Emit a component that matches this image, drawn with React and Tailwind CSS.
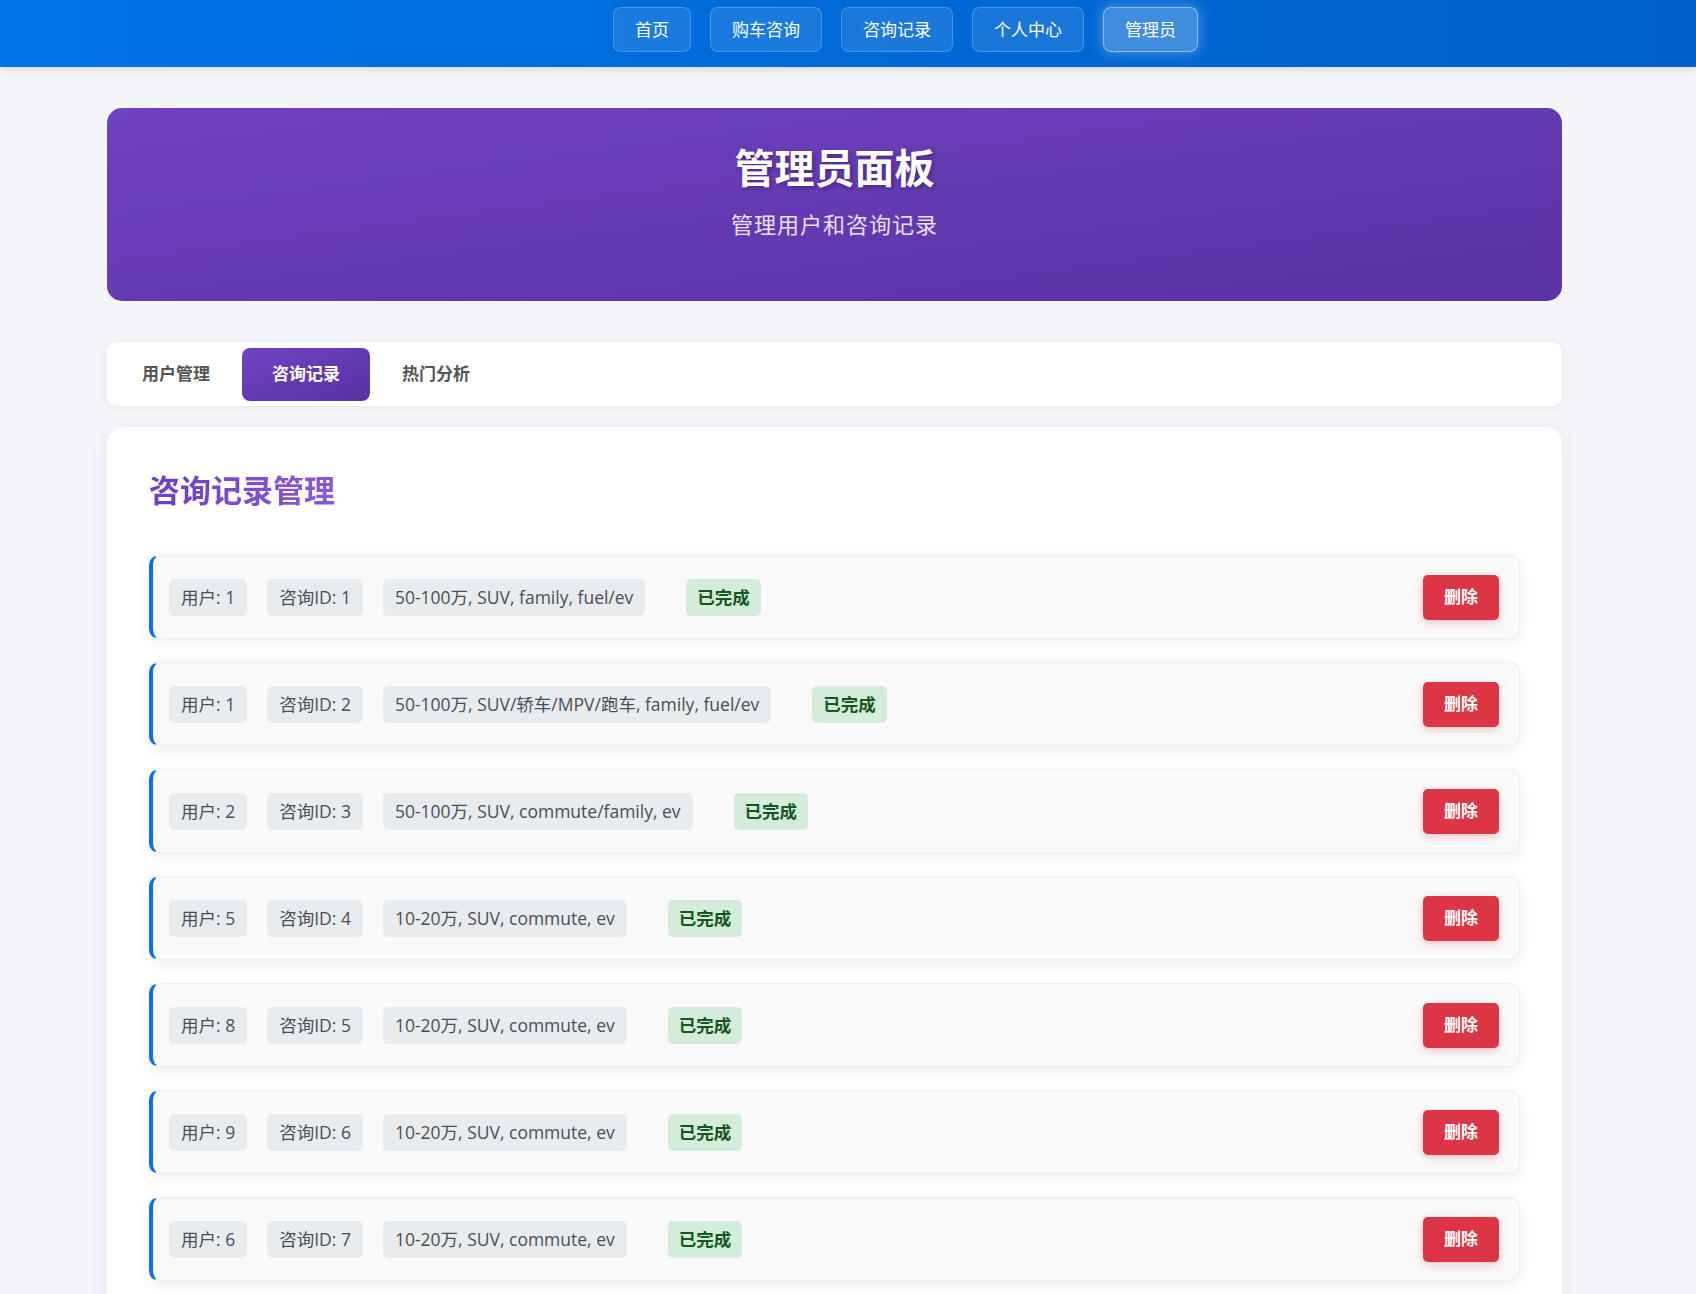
import React, { useState } from 'react';

const navItems = ['首页', '购车咨询', '咨询记录', '个人中心', '管理员'];
const tabs = ['用户管理', '咨询记录', '热门分析'];

const records = [
  { user: 1, id: 1, summary: '50-100万, SUV, family, fuel/ev' },
  { user: 1, id: 2, summary: '50-100万, SUV/轿车/MPV/跑车, family, fuel/ev' },
  { user: 2, id: 3, summary: '50-100万, SUV, commute/family, ev' },
  { user: 5, id: 4, summary: '10-20万, SUV, commute, ev' },
  { user: 8, id: 5, summary: '10-20万, SUV, commute, ev' },
  { user: 9, id: 6, summary: '10-20万, SUV, commute, ev' },
  { user: 6, id: 7, summary: '10-20万, SUV, commute, ev' },
  { user: 3, id: 8, summary: '20-30万, 轿车, commute, fuel' },
];

const Tag = ({ children }) => (
  <span className="rounded-[5px] bg-[#e9ecef] px-[12px] py-[5px] text-[17.5px] leading-[27px] text-[#4a4f55]">
    {children}
  </span>
);

const App = () => {
  const [activeTab, setActiveTab] = useState('咨询记录');

  return (
    <div className="min-h-screen bg-[#f4f5f9] font-['Open_Sans','Noto_Sans_CJK_SC',sans-serif]">
      {/* Top Navigation */}
      <nav className="h-[67px] bg-gradient-to-r from-[#0074e8] to-[#0060c9] pt-[7px] shadow-[0_2px_10px_rgba(0,0,0,0.12)]">
        <div className="ml-[613px] flex gap-[19px]">
          {navItems.map((item) => (
            <button
              key={item}
              className={
                item === '管理员'
                  ? 'rounded-[8px] border border-white/40 bg-white/25 px-[21px] py-[9px] text-[17px] leading-[25px] text-white shadow-[0_0_14px_rgba(255,255,255,0.35)]'
                  : 'rounded-[8px] border border-white/20 bg-white/10 px-[21px] py-[9px] text-[17px] leading-[25px] text-white'
              }
            >
              {item}
            </button>
          ))}
        </div>
      </nav>

      <main className="ml-[107px] w-[1455px] pt-[41px]">
        {/* Header */}
        <div className="h-[193px] rounded-[15px] bg-gradient-to-br from-[#6f42c1] to-[#5a32a3] pt-[31px] text-center text-white">
          <h1 className="text-[40px] font-bold leading-[58px] [text-shadow:2px_2px_4px_rgba(0,0,0,0.3)]">
            管理员面板
          </h1>
          <p className="mt-[12px] text-[22px] leading-[30px] tracking-[1px] text-white/85">管理用户和咨询记录</p>
        </div>

        {/* Tabs */}
        <div className="mt-[41px] flex h-[64px] items-center gap-[2px] rounded-[10px] bg-white px-[5px] shadow-[0_2px_10px_rgba(0,0,0,0.05)]">
          {tabs.map((tab) => (
            <button
              key={tab}
              onClick={() => setActiveTab(tab)}
              className={
                activeTab === tab
                  ? 'h-[53px] w-[128px] rounded-[8px] bg-gradient-to-br from-[#6f42c1] to-[#5a32a3] text-[17px] font-bold text-white'
                  : 'h-[53px] w-[128px] rounded-[8px] text-[17px] font-bold text-[#555]'
              }
            >
              {tab}
            </button>
          ))}
        </div>

        {/* Records */}
        <section className="mt-[21px] rounded-[16px] bg-white px-[42px] pb-[42px] pt-[42px] shadow-[0_5px_20px_rgba(0,0,0,0.05)]">
          <h2 className="inline-block bg-gradient-to-r from-[#6a3fc2] to-[#8a5ad4] bg-clip-text text-[31px] font-bold leading-[42px] text-transparent">
            咨询记录管理
          </h2>

          <div className="mt-[44px] flex flex-col gap-[23px]">
            {records.map((r) => (
              <div
                key={r.id}
                className="flex h-[84px] items-center rounded-[10px] border border-[#eeeeee] border-l-4 border-l-[#0a6fe3] bg-[#f9f9f9] pl-[16px] pr-[20px] shadow-[0_4px_14px_rgba(0,0,0,0.07)]"
              >
                <div className="flex items-center gap-[20px]">
                  <Tag>用户: {r.user}</Tag>
                  <Tag>咨询ID: {r.id}</Tag>
                  <Tag>{r.summary}</Tag>
                  <span className="ml-[21px] rounded-[5px] bg-[#d4edda] px-[11px] py-[5px] text-[17.5px] font-bold leading-[27px] text-[#155724]">
                    已完成
                  </span>
                </div>
                <button className="ml-auto h-[45px] rounded-[5px] bg-[#dc3545] px-[21px] text-[17px] font-bold text-white shadow-[0_3px_8px_rgba(220,53,69,0.25)]">
                  删除
                </button>
              </div>
            ))}
          </div>
        </section>
      </main>
    </div>
  );
};

export default App;
